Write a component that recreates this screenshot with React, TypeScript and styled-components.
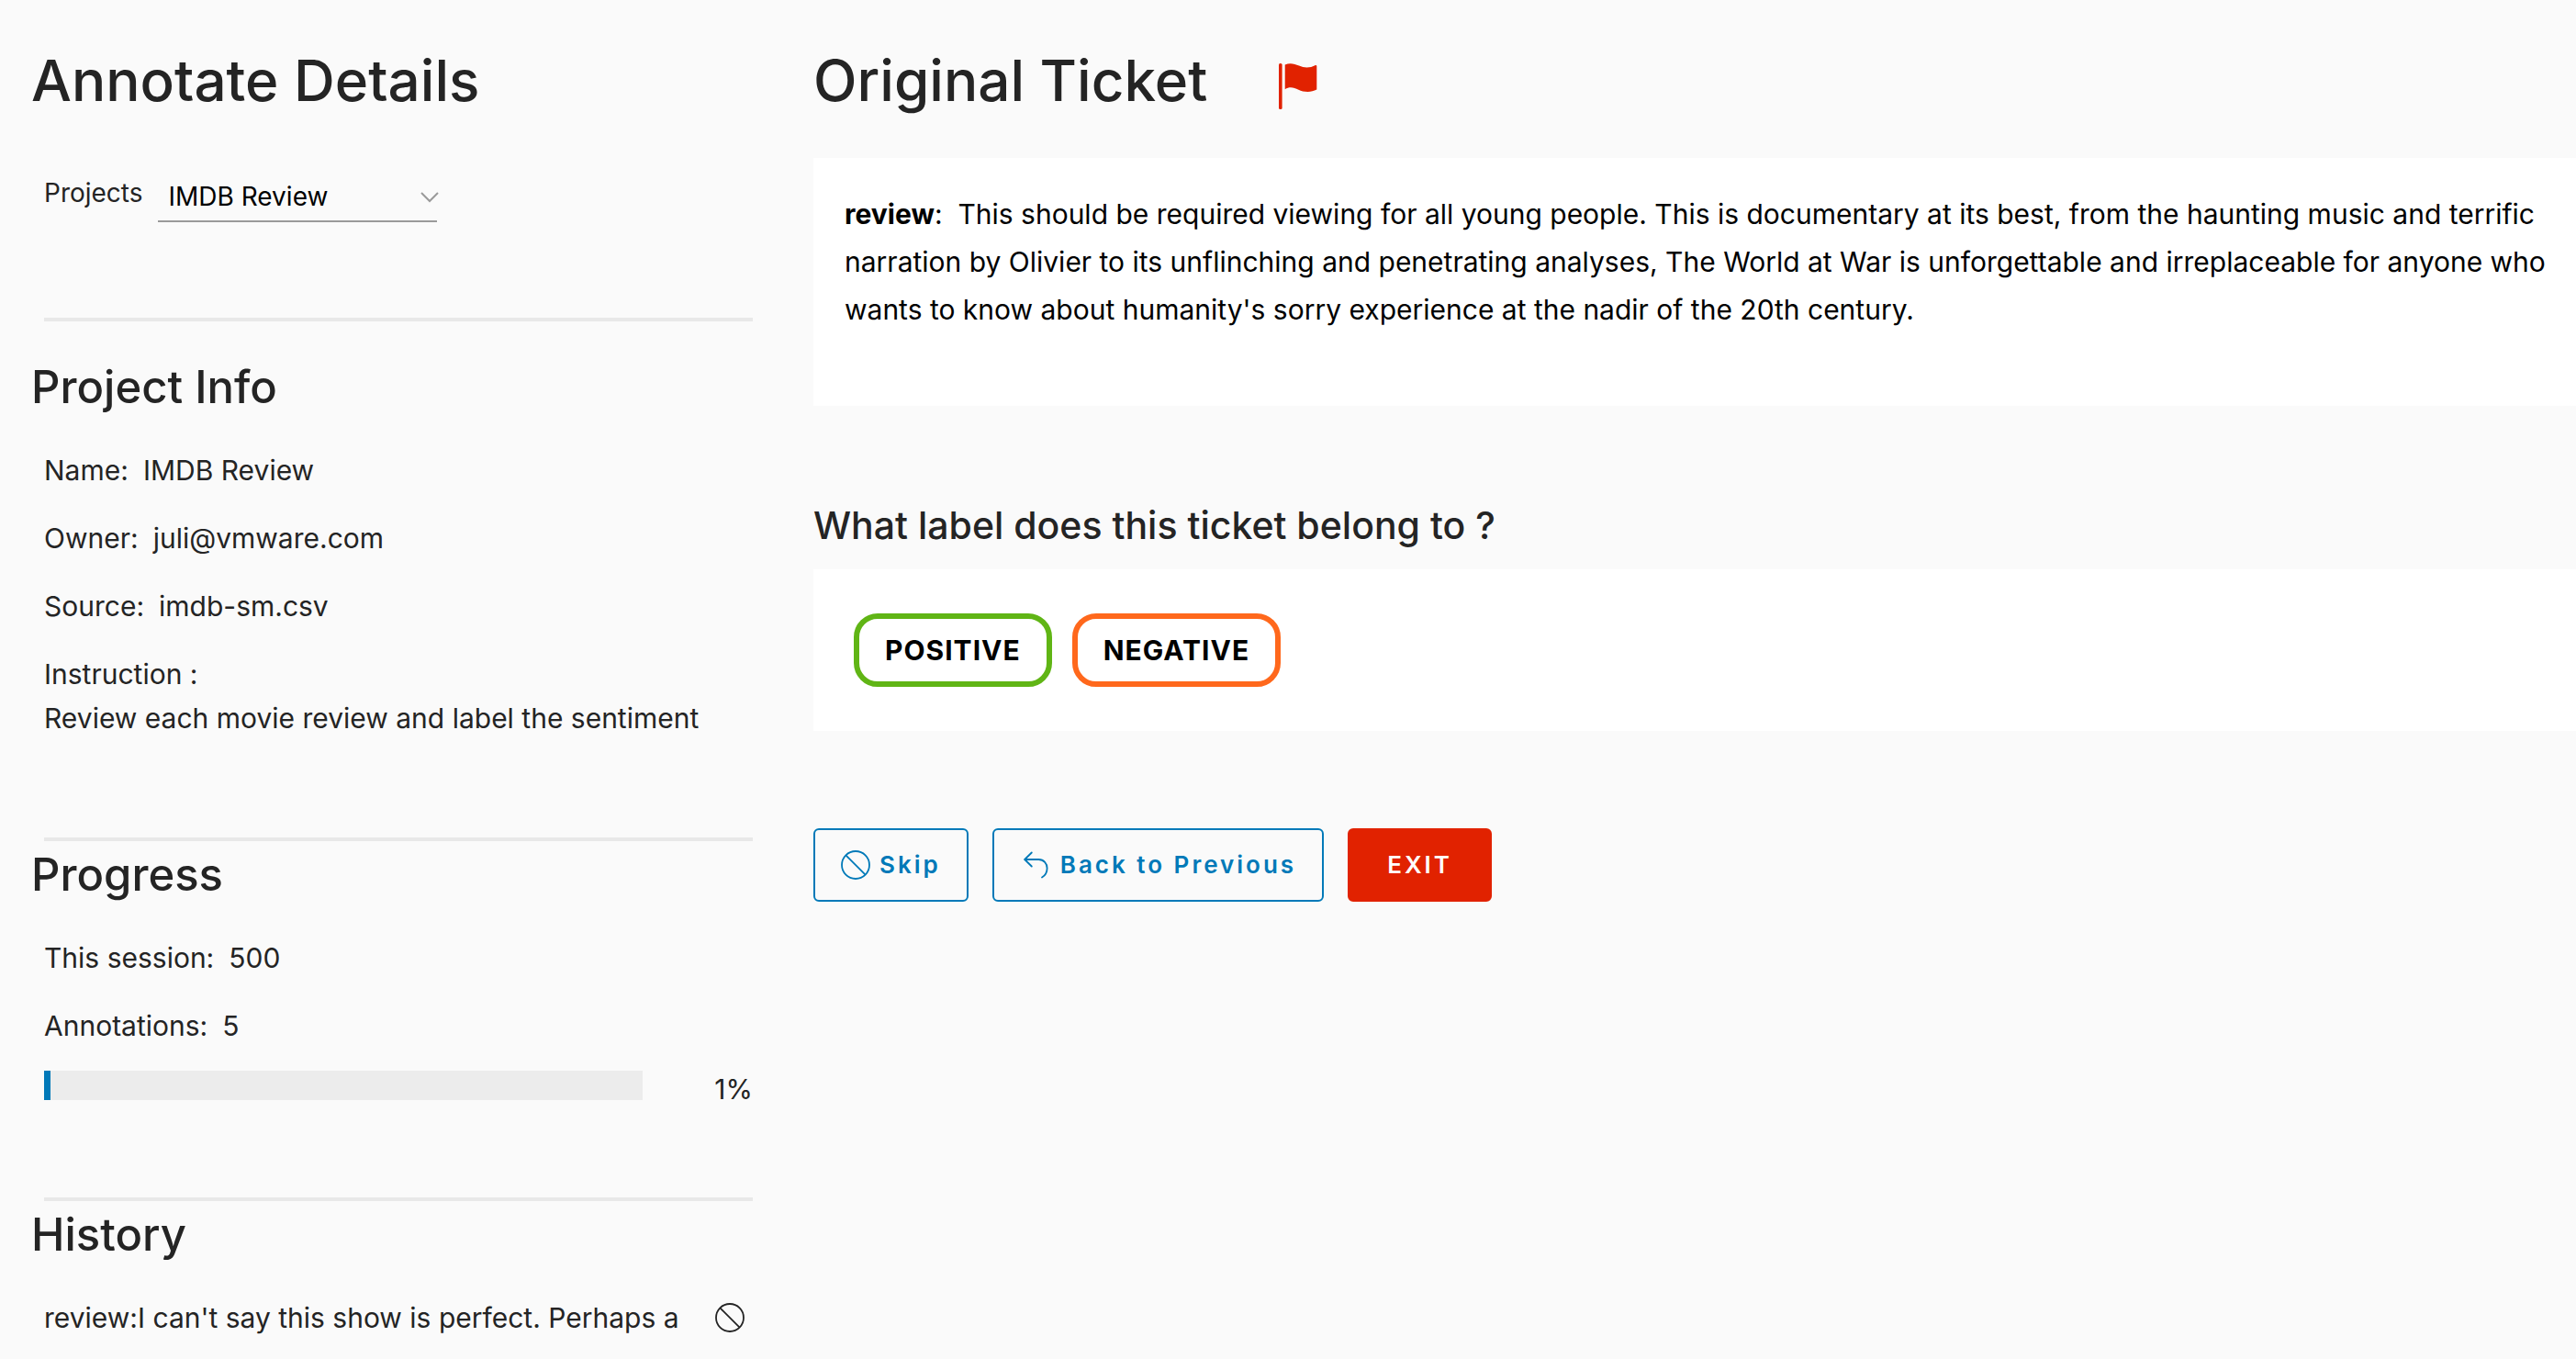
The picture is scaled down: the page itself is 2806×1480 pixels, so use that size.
import React, { useState } from "react";
import styled, { createGlobalStyle } from "styled-components";

const GlobalStyle = createGlobalStyle`
  *, *::before, *::after { box-sizing: border-box; }
  html, body { margin: 0; padding: 0; background: #fafafa; }
  body {
    color: #242424;
    font-family: Inter, "Liberation Sans", sans-serif;
    font-size: 30px;
    line-height: 48px;
    font-feature-settings: "calt" 0;
  }
  h1, h2, h3, p, dl, dd, ul { margin: 0; padding: 0; }
  button, select { font: inherit; color: inherit; }
  button { cursor: pointer; }
`;

const Page = styled.div`
  display: grid;
  grid-template-columns: minmax(0, 786px) minmax(0, 1fr);
  column-gap: 66px;
  padding: 52px 0 0 34px;
`;

const Sidebar = styled.aside`
  display: flex;
  flex-direction: column;
`;

const Main = styled.main`
  display: flex;
  flex-direction: column;
`;

const Title = styled.h1`
  font-size: 62px;
  line-height: 72px;
  font-weight: 500;
`;

const SectionTitle = styled.h2`
  margin-bottom: 36px;
  font-size: 49px;
  line-height: 60px;
  font-weight: 500;
`;

const Question = styled.h3`
  margin: 106px 0 24px;
  font-size: 41px;
  line-height: 48px;
  font-weight: 500;
`;

const Section = styled.section<{ $top: number; $bottom: number }>`
  padding: ${(p) => p.$top}px 0 ${(p) => p.$bottom}px;
`;

const Divider = styled.hr`
  width: auto;
  height: 4px;
  margin: 0 0 0 14px;
  border: 0;
  background: #e8e8e8;
`;

const ProjectRow = styled.div`
  display: flex;
  align-items: flex-start;
  gap: 16px;
  padding-left: 14px;
  font-size: 28px;
`;

const SelectWrap = styled.div`
  position: relative;
  width: 304px;

  svg {
    position: absolute;
    top: 23px;
    right: -2px;
    pointer-events: none;
  }
`;

const Select = styled.select`
  appearance: none;
  width: 100%;
  height: 56px;
  padding: 2px 32px 0 12px;
  border: 0;
  border-bottom: 2px solid #9a9a9a;
  border-radius: 0;
  background: transparent;
  color: #000;
`;

const FieldList = styled.dl`
  display: flex;
  flex-direction: column;
  gap: 26px;
  padding-left: 14px;
`;

const FieldRow = styled.div<{ $stacked?: boolean }>`
  display: flex;
  flex-direction: ${(p) => (p.$stacked ? "column" : "row")};
  column-gap: 16px;
`;

const ProgressRow = styled.div`
  display: flex;
  align-items: flex-start;
  justify-content: space-between;
  margin-top: 25px;
  padding-left: 14px;
  line-height: 40px;
`;

const Track = styled.div`
  width: 652px;
  height: 32px;
  background: #ececec;
`;

const Fill = styled.div`
  height: 100%;
  background: #0079b8;
`;

const HistoryList = styled.ul`
  padding-left: 14px;
  list-style: none;
`;

const HistoryItem = styled.li`
  display: flex;
  align-items: center;
  justify-content: space-between;
  padding-right: 9px;
`;

const HistoryText = styled.span`
  width: 700px;
  overflow: hidden;
  white-space: nowrap;
`;

const TitleRow = styled.div`
  display: flex;
  gap: 78px;
  margin-bottom: 48px;
`;

const FlagButton = styled.button`
  display: flex;
  align-self: flex-end;
  padding: 0 0 5px;
  border: 0;
  background: none;
  color: #e12200;
`;

const TicketPanel = styled.section`
  padding: 35px 26px 79px 34px;
  background: #fff;
  color: #000;
  line-height: 52px;
`;

const LabelPanel = styled.div`
  display: flex;
  gap: 22px;
  padding: 48px 44px;
  background: #fff;
`;

const LabelButton = styled.button<{ $color: string }>`
  height: 80px;
  padding: 0 28px;
  border: 6px solid ${(p) => p.$color};
  border-radius: 26px;
  background: #fff;
  color: #000;
  font-weight: 700;
  letter-spacing: 1px;
`;

const Actions = styled.div`
  display: flex;
  gap: 26px;
  margin-top: 106px;
`;

const ActionButton = styled.button<{ $danger?: boolean }>`
  display: flex;
  align-items: center;
  gap: 10px;
  height: 80px;
  padding: 0 ${(p) => (p.$danger ? 41 : 28)}px;
  border: 2px solid ${(p) => (p.$danger ? "#e12200" : "#0079b8")};
  border-radius: 6px;
  background: ${(p) => (p.$danger ? "#e12200" : "transparent")};
  color: ${(p) => (p.$danger ? "#fff" : "#0079b8")};
  font-size: 26px;
  font-weight: 600;
  letter-spacing: 3px;
`;

const BanIcon = () => (
  <svg width="32" height="32" viewBox="0 0 32 32" fill="none" stroke="currentColor" strokeWidth="1.8" aria-hidden="true">
    <circle cx="16" cy="16" r="15" />
    <path d="M5.6 5.6 26.4 26.4" />
  </svg>
);

const BackIcon = () => (
  <svg width="34" height="32" viewBox="-4 0 34 32" fill="none" stroke="currentColor" strokeWidth="1.8" strokeLinecap="round" strokeLinejoin="round" aria-hidden="true">
    <path d="M8.8 2.5 1.2 10 8.8 17.5" />
    <path d="M1.5 10H16.5C22 10 25.6 14.5 25.6 19.5C25.6 24 23.5 27.5 20 29.5" />
  </svg>
);

const FlagIcon = () => (
  <svg width="42" height="50" viewBox="0 0 42 50" fill="currentColor" aria-hidden="true">
    <rect width="3.6" height="50" rx="1.6" />
    <path d="M6.7 1.4C12 -.8 17 .3 22 2.6C28 5.3 34 5.2 40 2Q41.3 1.8 41.3 3V28.6C35 32 27 31.4 21.5 28.7C16 26 11.5 25.2 6.7 28.2Z" />
  </svg>
);

const Chevron = () => (
  <svg width="20" height="12" viewBox="0 0 20 12" fill="none" stroke="#9a9a9a" strokeWidth="2" aria-hidden="true">
    <path d="M1 1 10 10 19 1" />
  </svg>
);

const details = [
  { name: "Name:", value: "IMDB Review" },
  { name: "Owner:", value: "juli@vmware.com" },
  { name: "Source:", value: "imdb-sm.csv" },
  { name: "Instruction :", value: "Review each movie review and label the sentiment", stacked: true },
];

const counts = [
  { name: "This session:", value: "500" },
  { name: "Annotations:", value: "5" },
];

const labels = [
  { text: "POSITIVE", color: "#60b515" },
  { text: "NEGATIVE", color: "#ff681c" },
];

type Field = { name: string; value: string; stacked?: boolean };

const Fields = ({ items }: { items: Field[] }) => (
  <FieldList>
    {items.map((f) => (
      <FieldRow key={f.name} $stacked={f.stacked}>
        <dt>{f.name}</dt>
        <dd>{f.value}</dd>
      </FieldRow>
    ))}
  </FieldList>
);

export default function App() {
  const [project, setProject] = useState("IMDB Review");
  const percent = 1;

  return (
    <>
      <GlobalStyle />
      <Page>
        <Sidebar>
          <Title>Annotate Details</Title>
          <Section $top={62} $bottom={104}>
            <ProjectRow>
              <label htmlFor="project">Projects</label>
              <SelectWrap>
                <Select id="project" value={project} onChange={(e) => setProject(e.target.value)}>
                  <option>IMDB Review</option>
                </Select>
                <Chevron />
              </SelectWrap>
            </ProjectRow>
          </Section>
          <Divider />
          <Section $top={42} $bottom={106}>
            <SectionTitle>Project Info</SectionTitle>
            <Fields items={details} />
          </Section>
          <Divider />
          <Section $top={7} $bottom={98}>
            <SectionTitle>Progress</SectionTitle>
            <Fields items={counts} />
            <ProgressRow>
              <Track role="progressbar" aria-label="Annotations" aria-valuenow={percent} aria-valuemin={0} aria-valuemax={100}>
                <Fill style={{ width: `${percent}%` }} />
              </Track>
              <span>{percent}%</span>
            </ProgressRow>
          </Section>
          <Divider />
          <Section $top={7} $bottom={0}>
            <SectionTitle>History</SectionTitle>
            <HistoryList>
              <HistoryItem>
                <HistoryText>review:I can't say this show is perfect. Perhaps a</HistoryText>
                <BanIcon />
              </HistoryItem>
            </HistoryList>
          </Section>
        </Sidebar>
        <Main>
          <TitleRow>
            <Title>Original Ticket</Title>
            <FlagButton type="button" aria-label="Flag ticket">
              <FlagIcon />
            </FlagButton>
          </TitleRow>
          <TicketPanel>
            <p>
              <b>review</b>:&nbsp; This should be required viewing for all young people. This is documentary at its
              best, from the haunting music and terrific narration by Olivier to its unflinching and penetrating
              analyses, The World at War is unforgettable and irreplaceable for anyone who wants to know about
              humanity's sorry experience at the nadir of the 20th century.
            </p>
          </TicketPanel>
          <Question>What label does this ticket belong to ?</Question>
          <LabelPanel>
            {labels.map((l) => (
              <LabelButton key={l.text} type="button" $color={l.color}>
                {l.text}
              </LabelButton>
            ))}
          </LabelPanel>
          <Actions>
            <ActionButton type="button">
              <BanIcon />
              Skip
            </ActionButton>
            <ActionButton type="button">
              <BackIcon />
              Back to Previous
            </ActionButton>
            <ActionButton type="button" $danger>
              EXIT
            </ActionButton>
          </Actions>
        </Main>
      </Page>
    </>
  );
}
